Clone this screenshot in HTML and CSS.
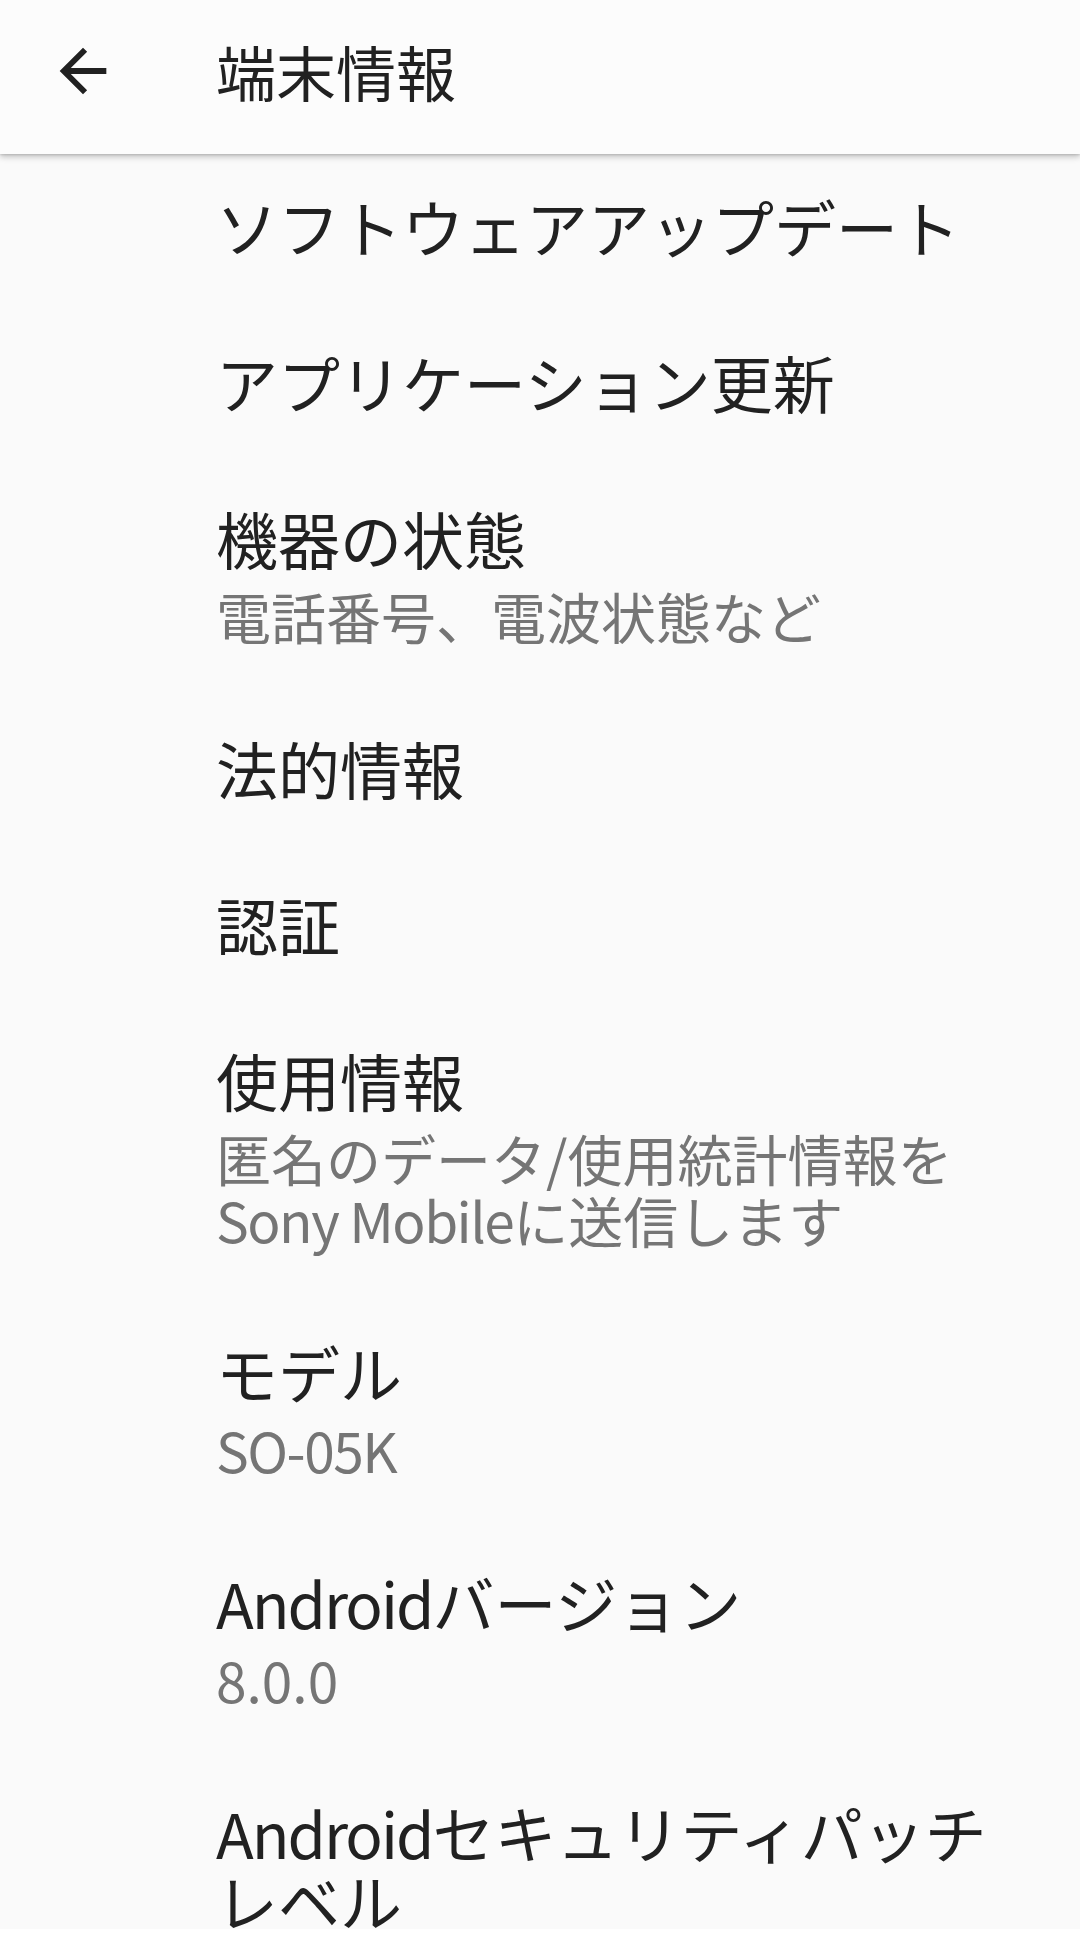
FILE: index.html
```html
<!DOCTYPE html>
<html lang="ja">
<head>
<meta charset="utf-8">
<title>端末情報</title>
<link rel="stylesheet" href="styles.css">
</head>
<body>
<div class="app">
  <header class="toolbar">
    <svg class="back" viewBox="0 0 24 24" aria-hidden="true">
      <path d="M20 11H7.83l5.59-5.59L12 4l-8 8 8 8 1.41-1.41L7.83 13H20v-2z"/>
    </svg>
    <h1 class="title">端末情報</h1>
  </header>
  <main class="list">
    <div class="item"><div class="item-title">ソフトウェアアップデート</div></div>
    <div class="item"><div class="item-title">アプリケーション更新</div></div>
    <div class="item">
      <div class="item-title">機器の状態</div>
      <div class="item-sub">電話番号、電波状態など</div>
    </div>
    <div class="item"><div class="item-title">法的情報</div></div>
    <div class="item"><div class="item-title">認証</div></div>
    <div class="item">
      <div class="item-title">使用情報</div>
      <div class="item-sub">匿名のデータ/使用統計情報を<br><span class="latin">Sony Mobile</span>に送信します</div>
    </div>
    <div class="item">
      <div class="item-title">モデル</div>
      <div class="item-sub"><span class="latin">SO-05K</span></div>
    </div>
    <div class="item">
      <div class="item-title"><span class="latin">Android</span>バージョン</div>
      <div class="item-sub">8.0.0</div>
    </div>
    <div class="item">
      <div class="item-title"><span class="latin">Android</span>セキュリティパッチ<br>レベル</div>
    </div>
  </main>
  <div class="bottom-strip"></div>
</div>
</body>
</html>
```
FILE: styles.css
```css
html, body {
  margin: 0;
  padding: 0;
}

body {
  width: 1080px;
  height: 1957px;
  overflow: hidden;
  background: #fafafa;
  font-family: "Noto Sans CJK JP", "Noto Sans", sans-serif;
  color: #212121;
}

.app {
  display: flex;
  flex-direction: column;
  height: 1957px;
}

.toolbar {
  flex: none;
  height: 154px;
  box-sizing: border-box;
  padding: 0 0 13px 48px;
  display: flex;
  align-items: center;
  background: #fcfcfc;
  box-shadow: 0 3px 6px rgba(0, 0, 0, 0.22), 0 1px 2px rgba(0, 0, 0, 0.12);
  position: relative;
  z-index: 1;
}

.back {
  width: 70px;
  height: 70px;
  fill: #212121;
  flex: none;
}

.title {
  margin: 0 0 0 98px;
  font-size: 60px;
  font-weight: 400;
  line-height: 68px;
  color: #212121;
}

.list {
  flex: 1;
  overflow: hidden;
}

.item {
  padding: 38px 44px 50px 216px;
}

.item-title {
  font-size: 62px;
  line-height: 68px;
  color: #212121;
}

.item-title .latin {
  letter-spacing: -2px;
}

.item-sub {
  margin-top: 12px;
  font-size: 55px;
  line-height: 62px;
  color: #757575;
}

.item-sub .latin {
  letter-spacing: -1.5px;
}

.bottom-strip {
  flex: none;
  height: 28px;
  background: #ffffff;
}
```
